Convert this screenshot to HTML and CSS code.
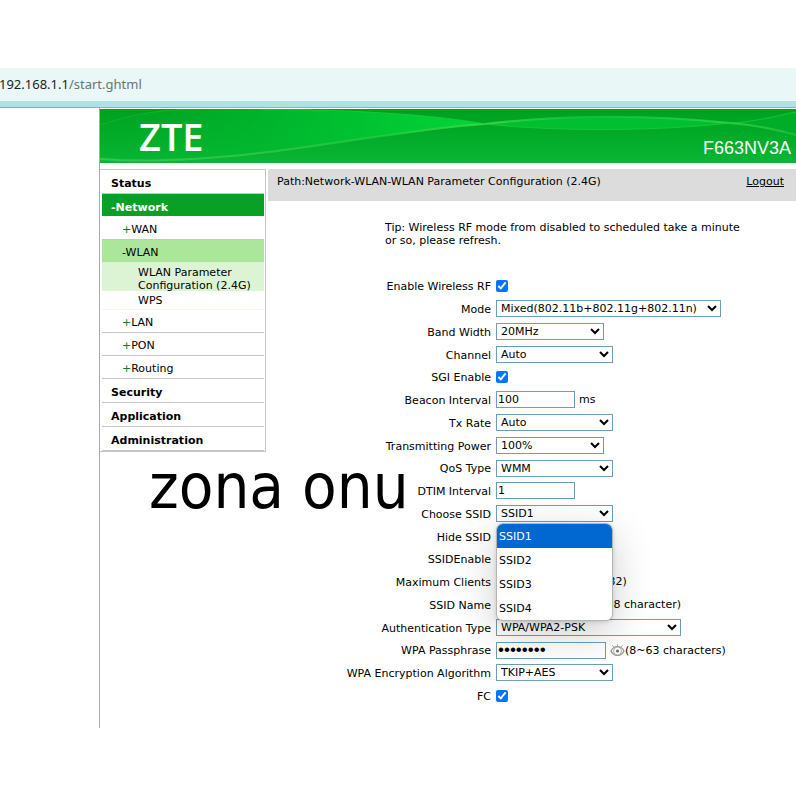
FILE: index.html
```
<!DOCTYPE html>
<html lang="en">
<head>
<meta charset="utf-8">
<title>F663NV3A</title>
<link rel="stylesheet" href="styles.css">
</head>
<body>
<div class="address"><span class="host">192.168.1.1</span>/start.ghtml</div>
<div class="page">
  <header class="banner">
    <svg class="waves" viewBox="0 0 696 54" preserveAspectRatio="none" aria-hidden="true">
      <defs>
        <linearGradient id="base" x1="0" y1="0" x2="0" y2="1"><stop offset="0" stop-color="#00a021"/><stop offset="0.5" stop-color="#02ab28"/><stop offset="1" stop-color="#0ab636"/></linearGradient>
        <linearGradient id="lens" x1="0" y1="0" x2="1" y2="0"><stop offset="0" stop-color="#00b32c" stop-opacity="0"/><stop offset="0.5" stop-color="#00bd30" stop-opacity="0.8"/><stop offset="1" stop-color="#00d838"/></linearGradient>
        <linearGradient id="glow" x1="0" y1="0" x2="1" y2="0"><stop offset="0" stop-color="#4ad055"/><stop offset="0.4" stop-color="#2ccc42"/><stop offset="0.55" stop-color="#4fe052"/><stop offset="0.7" stop-color="#10c838"/><stop offset="0.9" stop-color="#3fda4b"/><stop offset="1" stop-color="#20c840"/></linearGradient>
      </defs>
      <rect width="696" height="54" fill="url(#base)"/>
      <path d="M0 16C30 6 60 0 100 0H160C250 1 330 5 385 15C330 18 220 37 160 44C90 52 40 53 0 50Z" fill="url(#lens)"/>
      <path d="M385 15C470 5 550 6 630 14C560 22 460 23 385 15Z" fill="#00bf31"/>
      <path d="M630 14C655 13 675 7 696 3V26C675 20 655 16 630 14Z" fill="#00ad29"/>
      <path d="M0 50C40 53 90 52 160 44C220 37 330 18 385 15C470 5 550 6 630 14C655 16 675 20 696 26" fill="none" stroke="url(#glow)" stroke-width="2" opacity="0.7"/>
      <path d="M0 16C30 6 60 0 100 0" fill="none" stroke="#12b836" stroke-width="1" opacity="0.7"/>
      <path d="M160 0C250 1 330 5 385 15C460 23 560 22 630 14C655 13 675 7 696 3" fill="none" stroke="#15d03b" stroke-width="1" opacity="0.8"/>
    </svg>
    <span class="logo">ZTE</span>
    <span class="model">F663NV3A</span>
  </header>
  <div class="columns">
    <nav class="menu" aria-label="Main menu">
      <a class="top" href="#">Status</a>
      <a class="top open" href="#">-Network</a>
      <a class="sub" href="#"><i>+</i>WAN</a>
      <a class="sub open" href="#">-WLAN</a>
      <a class="leaf open" href="#">WLAN Parameter Configuration (2.4G)</a>
      <a class="leaf last" href="#">WPS</a>
      <a class="sub" href="#"><i>+</i>LAN</a>
      <a class="sub" href="#"><i>+</i>PON</a>
      <a class="sub" href="#"><i>+</i>Routing</a>
      <a class="top" href="#">Security</a>
      <a class="top" href="#">Application</a>
      <a class="top" href="#">Administration</a>
    </nav>
    <main class="content">
      <div class="path"><span>Path:Network-WLAN-WLAN Parameter Configuration (2.4G)</span><a href="#">Logout</a></div>
      <p class="tip">Tip: Wireless RF mode from disabled to scheduled take a minute or so, please refresh.</p>
      <form class="form">
        <div class="row"><label for="rf">Enable Wireless RF</label><div class="field"><input type="checkbox" id="rf" checked></div></div>
        <div class="row"><label for="mode">Mode</label><div class="field"><select id="mode" class="w-mode"><option>Mixed(802.11b+802.11g+802.11n)</option></select></div></div>
        <div class="row"><label for="band">Band Width</label><div class="field"><select id="band" class="w-small"><option>20MHz</option></select></div></div>
        <div class="row"><label for="channel">Channel</label><div class="field"><select id="channel"><option>Auto</option></select></div></div>
        <div class="row"><label for="sgi">SGI Enable</label><div class="field"><input type="checkbox" id="sgi" checked></div></div>
        <div class="row"><label for="beacon">Beacon Interval</label><div class="field"><input type="text" id="beacon" value="100"><span class="unit">ms</span></div></div>
        <div class="row"><label for="rate">Tx Rate</label><div class="field"><select id="rate"><option>Auto</option></select></div></div>
        <div class="row"><label for="power">Transmitting Power</label><div class="field"><select id="power" class="w-small"><option>100%</option></select></div></div>
        <div class="row"><label for="qos">QoS Type</label><div class="field"><select id="qos"><option>WMM</option></select></div></div>
        <div class="row"><label for="dtim">DTIM Interval</label><div class="field"><input type="text" id="dtim" value="1"></div></div>
        <div class="row"><label for="ssid">Choose SSID</label><div class="field"><select id="ssid"><option>SSID1</option></select>
          <ul class="popup" role="listbox" aria-label="Choose SSID">
            <li role="option" aria-selected="true">SSID1</li>
            <li role="option">SSID2</li>
            <li role="option">SSID3</li>
            <li role="option">SSID4</li>
          </ul></div></div>
        <div class="row"><label for="hide">Hide SSID</label><div class="field"><input type="checkbox" id="hide"></div></div>
        <div class="row"><label for="enable">SSIDEnable</label><div class="field"><input type="checkbox" id="enable" checked></div></div>
        <div class="row"><label for="clients">Maximum Clients</label><div class="field"><input type="text" id="clients" class="w-clients"><span class="unit">(1~32)</span></div></div>
        <div class="row"><label for="name">SSID Name</label><div class="field"><input type="text" id="name"><span class="unit">(1~128 character)</span></div></div>
        <div class="row"><label for="auth">Authentication Type</label><div class="field"><select id="auth" class="w-auth"><option>WPA/WPA2-PSK</option></select></div></div>
        <div class="row"><label for="pass">WPA Passphrase</label><div class="field"><input type="password" id="pass" class="w-pass" value="password">
          <svg class="eye" viewBox="0 0 15 13" aria-hidden="true"><g fill="none" stroke="#8b8f89"><path d="M1 7C4 1 11 1 14 7C11 13 4 13 1 7Z" stroke-width="1.2"/><circle cx="7.500" cy="7" r="4" stroke="#b0b4ae"/><path d="M2 1L4 3M7.500 0V2M13 1L11 3" stroke="#b4b8b2"/></g><circle cx="7.500" cy="7" r="1.500" fill="#666c64"/></svg><span>(8~63 characters)</span></div></div>
        <div class="row"><label for="algo">WPA Encryption Algorithm</label><div class="field"><select id="algo"><option>TKIP+AES</option></select></div></div>
        <div class="row"><label for="fc">FC</label><div class="field"><input type="checkbox" id="fc" checked></div></div>
      </form>
    </main>
  </div>
  <div class="watermark">zona onu</div>
</div>
</body>
</html>
```
FILE: styles.css
```
* { box-sizing: border-box; }
body {
  margin: 0;
  padding-top: 68px;
  background: #fff;
  color: #000;
  font: 11px/13px Verdana, "DejaVu Sans", sans-serif;
  overflow-x: hidden;
}
a { color: inherit; text-decoration: none; }

.address {
  height: 40px;
  background: #e9f7f7;
  border-bottom: 1px solid #8fb3bb;
  box-shadow: inset 0 -6px #aee1e4;
  color: #6a7474;
  font: 13px/33px "Noto Sans", sans-serif;
  text-indent: -1px;
  white-space: nowrap;
}
.host { color: #1c2222; }

.page {
  position: relative;
  margin-left: 99px;
  min-height: 620px;
  padding-top: 1px;
  border-left: 1px solid #a9a9a9;
}

.banner {
  position: relative;
  display: flex;
  justify-content: space-between;
  height: 54px;
  padding: 0 5px 0 39px;
  color: #fff;
}
.waves { position: absolute; inset: 0; width: 100%; height: 100%; }
.logo { position: relative; font: 600 38px/54px "Liberation Sans Narrow", "Open Sans", sans-serif; }
.model { position: relative; font: 18px/22px "Liberation Sans", Arial, sans-serif; align-self: flex-end; padding-bottom: 4px; }

.columns { display: flex; align-items: flex-start; gap: 2px; margin-top: 6px; }
.menu {
  flex: none;
  width: 166px;
  padding: 0 1px 0 2px;
  border: solid #c6c6c6;
  border-width: 1px 1px 1px 0;
}
.menu a { display: block; border-bottom: 1px solid #c6c6c6; }
.menu i { color: #0c7a2c; font-style: normal; }
.menu .top { padding-left: 9px; font-weight: bold; line-height: 23px; height: 24px; padding-top: 2px; }
.menu .top.open { background: #0a9f25; color: #fff; border: 0; height: 22px; margin-bottom: 1px; }
.menu .sub { padding-left: 20px; line-height: 26px; height: 23px; }
.menu .sub.open { background: #ace69a; border: 0; height: 22px; }
.menu .leaf { padding: 4px 8px 0 36px; border: 0; }
.menu .leaf.open { height: 29px; background: #dcf4d4; }
.menu .leaf.last { height: 19px; padding-top: 3px; border-bottom: 1px solid #e9fbe2; }

.content { flex: 1; min-width: 0; }
.path {
  display: flex;
  justify-content: space-between;
  min-height: 32px;
  padding: 6px 12px 0 9px;
  background: #dcdcdc;
}
.path a { text-decoration: underline; }
.tip { max-width: 473px; margin: 0; padding: 20px 0 0 117px; }
.form { margin-top: 28px; }
.row { display: grid; grid-template-columns: 223px 1fr; column-gap: 5px; align-items: center; height: 23px; white-space: nowrap; }
.row:nth-child(4n+1) { height: 22px; }
.row label { text-align: right; padding-top: 1px; }
.field { position: relative; display: flex; align-items: center; }

select, input[type="text"], input[type="password"] {
  height: 17px;
  margin: 0;
  border: 1px solid #6f9db9;
  border-radius: 0;
  background: #fff;
  color: #000;
  font: inherit;
}
select { width: 117px; padding: 0; }
input[type="text"] { width: 79px; padding: 0 1px; }
input[type="checkbox"] { width: 12px; height: 12px; margin: 0; accent-color: #0075ff; }
.w-mode { width: 225px; }
.w-small { width: 108px; }
.w-auth { width: 185px; }
input.w-pass { width: 110px; padding: 0 1px; font-family: "Liberation Sans", Arial, sans-serif; font-size: 17px; }
input.w-clients { width: 88px; }
.unit { margin-left: 4px; }
.eye { width: 15px; height: 13px; margin-left: 4px; }

.popup {
  position: absolute;
  top: 100%;
  left: 0;
  z-index: 2;
  width: 117px;
  margin: 1px 0 0;
  padding: 0;
  overflow: hidden;
  list-style: none;
  background: #fff;
  border: 1px solid #b5b5b5;
  border-radius: 7px;
  box-shadow: 0 12px 40px rgba(0, 0, 0, 0.2), 0 1px 4px rgba(0, 0, 0, 0.15);
}
.popup li { height: 24px; padding-left: 2px; line-height: 26px; }
.popup [aria-selected] { background: #0068d0; color: #fff; }

.watermark {
  position: absolute;
  top: 339px;
  left: 49px;
  font: 63px/80px Tahoma, "DejaVu Sans Condensed", "DejaVu Sans", sans-serif;
  white-space: nowrap;
}
```
